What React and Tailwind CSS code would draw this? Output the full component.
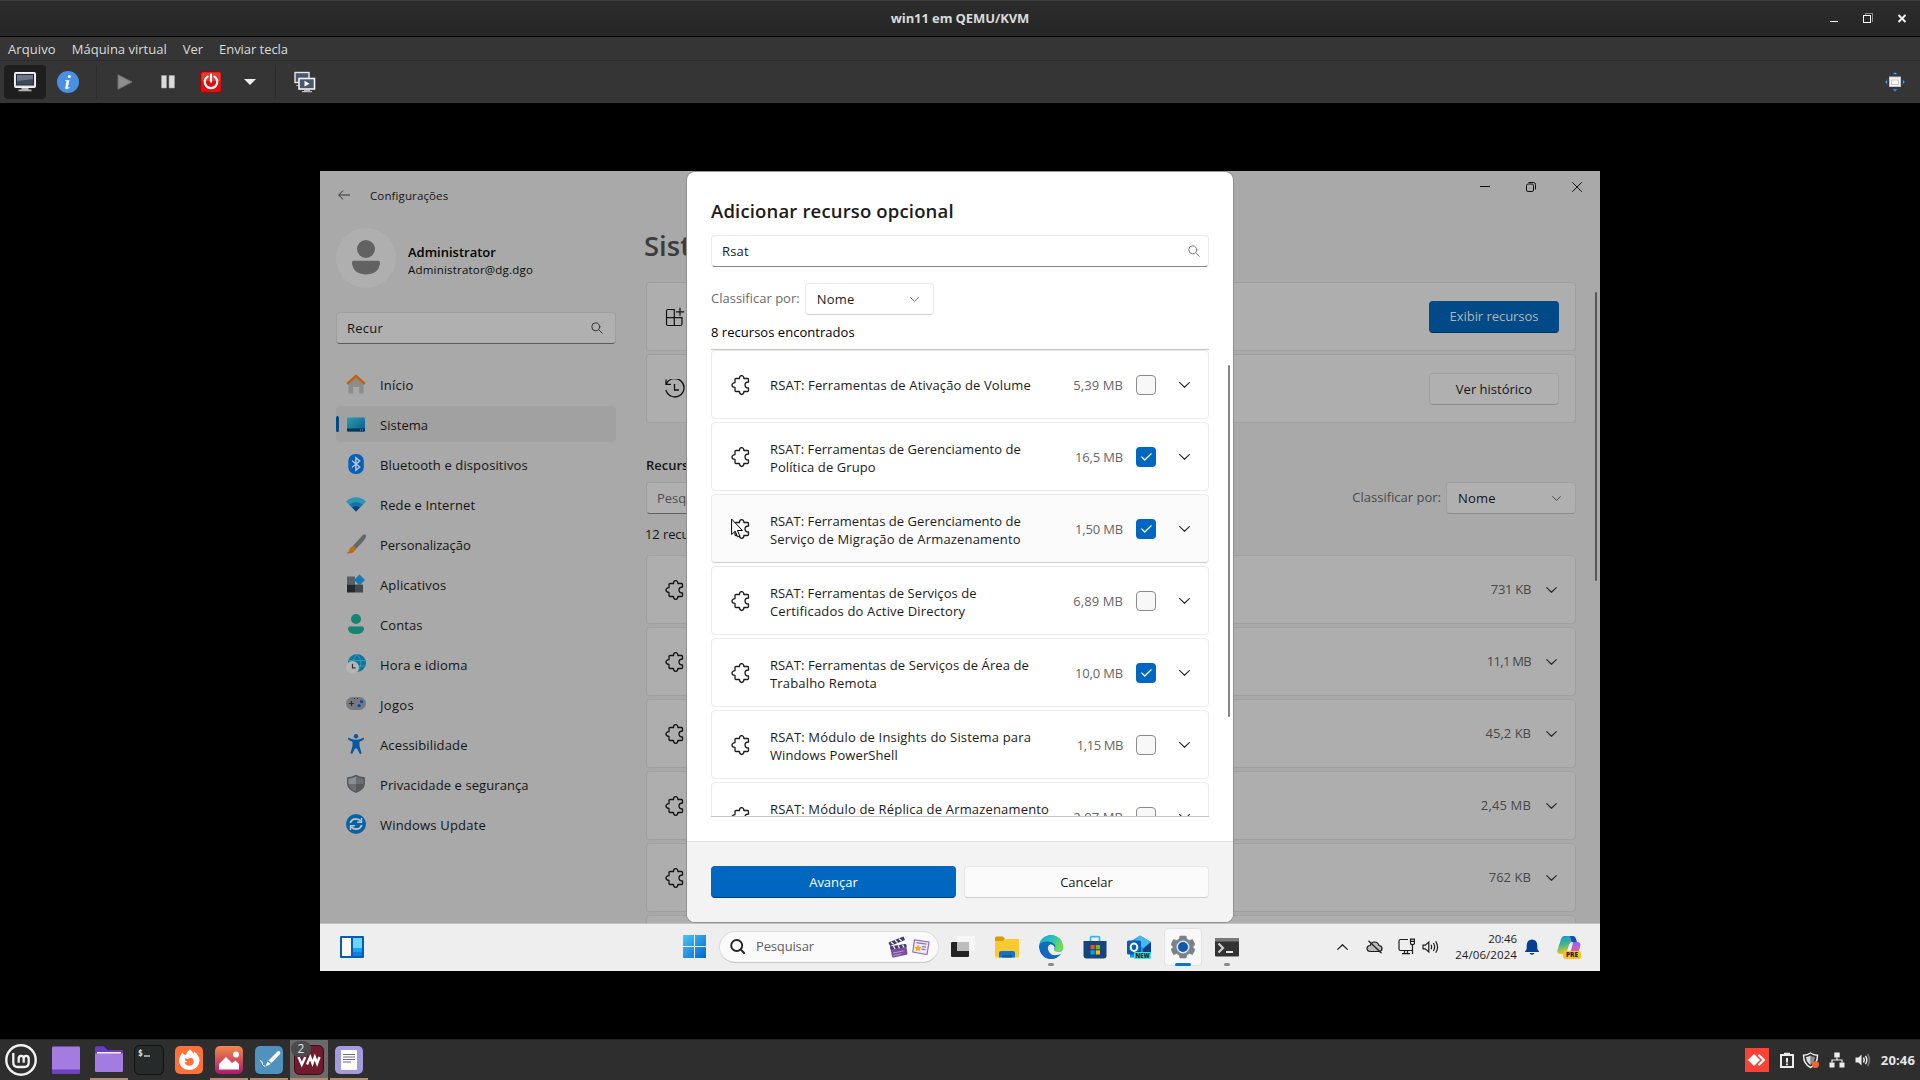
import React from "react";

const PUZZLE =
  "M17.5 7V4.500a1 1 0 0 0-1-1h-3.600C12.900 1.500 11.800.7 10.700.7S8.500 1.500 8.500 3.500H5a1 1 0 0 0-1 1v3.200C2 7.700 1 8.800 1 10S2 12.300 4 12.300v3.200a1 1 0 0 0 1 1h3.500c0 2 1.100 2.800 2.200 2.800s2.200-.8 2.200-2.800h3.600a1 1 0 0 0 1-1V13C15.500 13 14 12 14 10s1.500-3 3.500-3Z";

function Puzzle({ className = "" }) {
  return (
    <svg viewBox="0 0 20 20" className={`h-5 w-5 shrink-0 ${className}`} fill="none" stroke="currentColor" strokeWidth="1.3" strokeLinejoin="round">
      <path d={PUZZLE} />
    </svg>
  );
}

function Chevron({ className = "h-[6px] w-[11px]" }) {
  return (
    <svg viewBox="0 0 11 6" className={`shrink-0 ${className}`} fill="none" stroke="currentColor" strokeWidth="1.2" strokeLinecap="round" strokeLinejoin="round">
      <path d="M.7.6 5.5 5.3 10.3.6" />
    </svg>
  );
}

function Search({ className = "" }) {
  return (
    <svg viewBox="0 0 12 12" className={`h-3 w-3 shrink-0 ${className}`} fill="none" stroke="currentColor" strokeLinecap="round">
      <circle cx="4.8" cy="4.8" r="4" />
      <path d="m7.8 7.8 3.5 3.5" />
    </svg>
  );
}

/* ---------- virt-manager window chrome ---------- */

function HostTitleBar() {
  return (
    <div className="flex h-[37px] items-center border-b border-black border-t border-t-[#3c3c3c] bg-gradient-to-b from-[#2c2c2c] to-[#262626]">
      <div className="w-[100px]" />
      <div className="flex-1 text-center text-[13px] font-bold tracking-[-0.1px] text-[#dadada]">win11 em QEMU/KVM</div>
      <div className="flex w-[100px] items-center">
        <svg viewBox="0 0 100 20" className="h-5 w-[100px]" shapeRendering="crispEdges">
          <rect x="10" y="12" width="8" height="1" fill="#fff" />
          <path d="M45.500 5.500V4.500H52.500V12.500H51.500" fill="none" stroke="#8a8a8a" />
          <rect x="43.500" y="6.500" width="7" height="7" fill="none" stroke="#fff" />
          <path d="M78.500 6l7 7M85.500 6l-7 7" stroke="#f2f2f2" strokeWidth="2" shapeRendering="auto" />
        </svg>
      </div>
    </div>
  );
}

function HostMenu() {
  return (
    <div className="flex h-6 items-center gap-[17px] border-b border-[#2c2c2c] bg-[#353535] pl-2 pt-[2px] text-[13px] text-[#dcdcdc]">
      <span className="tracking-[0.1px]">Arquivo</span>
      <span className="-ml-[1px]">Máquina virtual</span>
      <span className="-ml-[1px]">Ver</span>
      <span className="-ml-[1px] tracking-[-0.05px]">Enviar tecla</span>
    </div>
  );
}

function Monitor() {
  return (
    <svg viewBox="0 0 22 20" className="h-5 w-[22px]">
      <rect x=".5" y=".5" width="21" height="15" rx="1" fill="#e4e4e4" stroke="#f5f5f5" />
      <rect x="2.500" y="2.500" width="17" height="10.500" fill="#3d4a5c" stroke="#1f2937" />
      <path d="M3 3h16v4L3 9z" fill="#6b7789" />
      <path d="M7.500 16h7v1.500h3v1.800h-13v-1.800h3z" fill="#b5b5b0" />
    </svg>
  );
}

function HostToolbar() {
  return (
    <div className="flex h-[42px] items-center bg-[#353535] pl-1">
      <div className="flex h-[34px] w-[42px] items-center justify-center rounded-[4px] bg-[#1e1e1e]"><Monitor /></div>
      <svg viewBox="0 0 22 22" className="ml-[11px] h-[22px] w-[22px]">
        <circle cx="11" cy="11" r="11" fill="#4a90e2" />
        <circle cx="12.300" cy="5.600" r="1.500" fill="#fff" />
        <path d="M8.300 9.200h4.200l-1.700 7q-.2 1 1.400-.1l.4.700q-3 2.300-4.300.7-.3-.5 0-1.500l1.300-5.600-1.500-.3z" fill="#fff" />
      </svg>
      <div className="ml-[17px] h-[34px] w-px bg-[#2c2c2c]" />
      <svg viewBox="0 0 16 16" className="ml-5 h-4 w-4"><path d="M1 .8 15 8 1 15.200z" fill="#8d8d8d" stroke="#6f6f6f" /></svg>
      <svg viewBox="0 0 14 14" className="ml-7 h-[14px] w-[14px]"><path d="M.5.5h5v12.500h-5zM8 .5h5.500v12.500H8z" fill="#dcdcdc" stroke="#9a9a9a" strokeWidth=".6" /></svg>
      <svg viewBox="0 0 22 22" className="ml-[25px] h-[22px] w-[22px]">
        <rect x=".5" y=".5" width="21" height="21" rx="2.500" fill="#dc1010" stroke="#8f0c0c" />
        <path d="M1.500 3q0-1.500 1.500-1.500h16q1.500 0 1.500 1.500v7h-19z" fill="#e23b32" />
        <path d="M7.600 5.600a6.300 6.300 0 1 0 6.800 0" fill="none" stroke="#fff" strokeWidth="2.200" strokeLinecap="round" />
        <path d="M11 3.600v7" stroke="#fff" strokeWidth="2.200" strokeLinecap="round" />
      </svg>
      <svg viewBox="0 0 12 6" className="ml-[22px] h-[6px] w-3"><path d="M0 0h12L6 6z" fill="#f0f0f0" /></svg>
      <div className="ml-[19px] h-[34px] w-px bg-[#2c2c2c]" />
      <svg viewBox="0 0 22 22" className="ml-[18px] h-[22px] w-[22px]">
        <rect x="1" y="1.500" width="14" height="10" fill="#4b586b" stroke="#e8e8e8" strokeWidth="1.400" />
        <path d="M2 14h4v1H2z" fill="#aaa" />
        <rect x="5" y="7.500" width="15.500" height="10.500" fill="#4b586b" stroke="#f4f4f4" strokeWidth="1.600" />
        <path d="M10.500 9.800l5 2.900-5 2.900z" fill="#fff" />
        <path d="M10 19h6v1h2v1.200H8V20h2z" fill="#b8b8b4" />
      </svg>
      <div className="flex-1" />
      <svg viewBox="0 0 22 22" className="mr-[14px] h-[22px] w-[22px]">
        <g fill="#6aa5ea" stroke="#1c3f77" strokeWidth=".8">
          <path d="M11 1l3 2.500H8zM11 20.500l3-2.500H8zM.800 11 3.300 8.300v5.400zM21.200 11l-2.500-2.700v5.400z" />
        </g>
        <rect x="5.500" y="6" width="11" height="9.500" fill="#f4f4f0" stroke="#c9c9c5" />
        <rect x="7.500" y="9" width="7" height="4.500" fill="#fff" stroke="#bfc0b8" strokeWidth=".8" />
      </svg>
    </div>
  );
}

/* ---------- Settings app ---------- */

const NAV = [
  ["Início", "tracking-[0.2px]",
    <g key="i"><path d="M3.500 9 10 3l6.500 6 1 0v10.500h-4.300V13H7.200v6.500H2.500V9z" fill="#8d8d8d" /><path d="m1.200 10 8.800-8.200L18.800 10" fill="none" stroke="#c4610f" strokeWidth="2.500" strokeLinejoin="round" /></g>],
  ["Sistema", "tracking-[0.05px]",
    <g key="i"><defs><linearGradient id="sys" x2="1" y2="1"><stop stopColor="#2a9dab" /><stop offset="1" stopColor="#0d5a91" /></linearGradient></defs><rect x="1" y="3.500" width="18" height="14" rx="1" fill="url(#sys)" /><path d="M1 14.500h18v2q0 1-1 1H2q-1 0-1-1z" fill="#0b3556" /><path d="M14 16h1m1 0h1" stroke="#6fb6d6" strokeWidth=".8" /></g>],
  ["Bluetooth e dispositivos", "tracking-[0.12px]",
    <g key="i"><rect x="2.300" width="15.500" height="20" rx="7" fill="#0a5fb8" /><path d="m6.200 6.800 7.500 6.200-3.800 3.200V3.800l3.800 3.200-7.500 6.200" fill="none" stroke="#bcc8d4" strokeWidth="1.400" /></g>],
  ["Rede e Internet", "tracking-[0.12px]",
    <g key="i"><path d="M0 7.500Q10-.800 20 7.500l-10 10z" fill="#2a97b3" /><path d="M3.200 10.500q6.800-5.200 13.600 0l-6.800 7z" fill="#1173a8" /><path d="M6.200 13.500q3.800-3 7.600 0l-3.800 4z" fill="#0c3f78" /></g>],
  ["Personalização", "tracking-[0px]",
    <g key="i"><path d="M19.700.8Q18.500-.8 14.500 3.500L6.800 12l3.200 3 7.500-8q3.500-4.500 2.200-6.200z" fill="#61686f" /><path d="M7.300 12q2.800.5 2.700 3.300-2.500 5-9.700 4 2.400-.8 3-3.500 1-3 4-3.800z" fill="#c06a17" /></g>],
  ["Aplicativos", "tracking-[0.15px]",
    <g key="i"><path d="M1 2.500h8v8H1z" fill="#596068" /><path d="M1 10.500h8v8H1z" fill="#26282b" /><path d="M9 10.500h8v8H9z" fill="#44494f" /><path d="m13.500.5 5.500 5.500-5.500 5.500L8 6z" fill="#1a79b5" /></g>],
  ["Contas", "tracking-[0.1px]",
    <g key="i"><circle cx="10" cy="5" r="5" fill="#158472" /><path d="M2 14.500q0-2 2-2h12q2 0 2 2-.5 5.500-8 5.500T2 14.500z" fill="#128673" /></g>],
  ["Hora e idioma", "tracking-[0.15px]",
    <g key="i"><circle cx="11" cy="9" r="9" fill="#15719f" /><path d="M2.500 6.500h17M3 12h16.500M11 0q-8 9 0 18M11 0q8 9 0 18" fill="none" stroke="#2ba0b0" strokeWidth="1" /><circle cx="6.500" cy="13.500" r="6.500" fill="#b5b5b5" /><path d="M6.500 9.800v4h3" fill="none" stroke="#333" strokeWidth="1.200" /></g>],
  ["Jogos", "tracking-[0.3px]",
    <g key="i"><rect y="3" width="20" height="13" rx="6.500" fill="#767a80" /><path d="M3 9.500h5M5.500 7v5" stroke="#2b2d30" strokeWidth="1.200" /><circle cx="15.500" cy="7.700" r="1.600" fill="#0b4f96" /><circle cx="13.200" cy="11.600" r="1.600" fill="#0b4f96" /><path d="M8 4.500h1m2 0h1" stroke="#333" /></g>],
  ["Acessibilidade", "tracking-[0.14px]",
    <g key="i"><circle cx="10" cy="2.200" r="2.200" fill="#08599f" /><path d="M2.500 3.800Q10 7.500 17.500 3.800q1 .9 0 1.900-2 1.300-4 2V12l2 7q-.8 1.500-2 .5L11 14.500h-2l-2.500 5q-1.500.8-2-.5l2-7V7.700q-2-.7-4-2-1-1 0-1.900z" fill="#08599f" /></g>],
  ["Privacidade e segurança", "tracking-[0.09px]",
    <g key="i"><path d="M10 .8q4 2.400 9 2.400V10q-.7 6-9 9Q1.700 16 1 10V3.200q5 0 9-2.400z" fill="#565a5f" /><path d="M10 2.500q3.500 2 7.500 2.200V10H10zM10 10v7.500Q3.200 15 2.600 10z" fill="#6b6f74" /><path d="M10 2.500Q6.500 4.500 2.500 4.700V10H10z" fill="#8b8f94" /></g>],
  ["Windows Update", "tracking-[0.2px]",
    <g key="i"><circle cx="10" cy="10" r="10" fill="#0b62a3" /><path d="M4.300 9Q5.500 4.800 10 4.800q2.700 0 4.700 2.300M15.700 11q-1.200 4.200-5.700 4.200-2.700 0-4.700-2.300" fill="none" stroke="#b9c6d0" strokeWidth="1.700" /><path d="M15.500 4v4.200h-4.300M4.500 16v-4.200h4.300" fill="none" stroke="#b9c6d0" strokeWidth="1.500" /></g>],
];

function Sidebar() {
  return (
    <div className="flex w-[280px] shrink-0 flex-col">
      <div className="flex h-[60px] items-center gap-3">
        <svg viewBox="0 0 60 60" className="h-[60px] w-[60px]">
          <circle cx="30" cy="30" r="30" fill="#afafaf" />
          <circle cx="30" cy="21" r="9" fill="#626262" />
          <path d="M16 34.500q0-1.700 1.700-1.700h24.600q1.700 0 1.700 1.700v1.500Q42 46.500 30 46.500T16 36z" fill="#626262" />
        </svg>
        <div className="flex flex-col pt-[3px]">
          <div className="h-[18px] text-[13px] font-semibold leading-[18px] text-black">Administrator</div>
          <div className="h-4 text-[11.5px] leading-[17px] tracking-[0.2px] text-[#0a0a0a]">Administrator@dg.dgo</div>
        </div>
      </div>
      <div className="mt-6 flex h-8 items-center justify-between rounded-[4px] border border-[#9e9e9e] border-b-[#5e5e5e] bg-[#b0b0b0] pl-[10px] pr-3 text-[13px] tracking-[0.25px] text-[#151515]">
        <span className="pt-px">Recur</span>
        <Search className="text-[#333]" />
      </div>
      <div className="mt-[22px] flex flex-col gap-1">
        {NAV.map(([label, track, icon], i) => (
          <div key={label} className={`flex h-9 items-center rounded-[4px] text-[13px] text-[#151515] ${i === 1 ? "bg-[#a1a1a1]" : ""}`}>
            <div className={`h-4 w-[3px] rounded-full ${i === 1 ? "bg-[#004a87]" : ""}`} />
            <svg viewBox="0 0 20 20" className="ml-[7px] h-5 w-5">{icon}</svg>
            <span className={`ml-[14px] pt-[3px] ${track}`}>{label}</span>
          </div>
        ))}
      </div>
    </div>
  );
}

const INSTALLED = [
  ["731 KB", "tracking-[-0.3px]"],
  ["11,1 MB", "tracking-[-0.7px]"],
  ["45,2 KB", "tracking-[0px]"],
  ["2,45 MB", "tracking-[0.15px]"],
  ["762 KB", "tracking-[0.05px]"],
  ["", ""],
];

const CARD = "flex h-[69px] shrink-0 items-center rounded-[4px] border border-[#9f9f9f] bg-[#aeaeae]";

function SettingsMain() {
  return (
    <div className="ml-[30px] flex w-[930px] flex-col text-[13px] text-[#151515]">
      <div className="-ml-[2px] h-[54px] text-[27.5px] font-semibold leading-[36px] text-[#3c3c3c]">Sistema</div>
      <div className="flex flex-col gap-[3px]">
        <div className={`${CARD} justify-between pl-[18px] pr-4`}>
          <svg viewBox="0 0 20 20" className="h-5 w-5" fill="none" stroke="#111" strokeWidth="1.200">
            <path d="M1.500 4q0-1.500 1.500-1.500h6.300V18.500H3q-1.500 0-1.500-1.500zM1.500 10.700H17V17q0 1.500-1.500 1.500H9.300M15 .8v8M11 4.800h8.200" />
          </svg>
          <div className="flex h-8 w-[130px] items-center justify-center rounded-[4px] border border-[#00498a] border-b-[#002f5a] bg-[#004a87] pt-px text-[#b4b4b4] tracking-[-0.05px]">Exibir recursos</div>
        </div>
        <div className={`${CARD} justify-between pl-[18px] pr-4`}>
          <svg viewBox="0 0 20 20" className="h-5 w-5" fill="none" stroke="#111" strokeWidth="1.300">
            <path d="M1 .5v4.800h5M1.500 4.800A9.200 9.200 0 1 1 .9 11M9.500 5v6h4.500" />
          </svg>
          <div className="flex h-8 w-[130px] items-center justify-center rounded-[4px] border border-[#a2a2a2] border-b-[#8c8c8c] bg-[#b0b0b0] pt-[2px]">Ver histórico</div>
        </div>
      </div>
      <div className="mt-[32px] h-[20px] font-semibold leading-[20px]">Recursos instalados</div>
      <div className="mt-[7px] flex h-8 items-center justify-between">
        <div className="flex h-8 w-[280px] items-center rounded-[4px] border border-[#9e9e9e] border-b-[#5e5e5e] bg-[#b0b0b0] pl-[10px] pt-px text-[#4f4f4f]">Pesquisar recursos</div>
        <div className="flex items-center gap-[5px] text-[#4a4a4a]">
          <span>Classificar por:</span>
          <div className="flex h-8 w-[130px] items-center justify-between rounded-[4px] border border-[#a0a0a0] border-b-[#8c8c8c] bg-[#b0b0b0] pl-[11px] pr-[14px]">
            <span className="pt-[2px] tracking-[0.2px] text-[#151515]">Nome</span>
            <Chevron className="h-[5px] w-[9px]" />
          </div>
        </div>
      </div>
      <div className="mt-[10px] h-5 leading-5 -ml-px tracking-[-0.1px]">12 recursos encontrados</div>
      <div className="mt-[11px] flex h-[368px] flex-col gap-[3px] overflow-hidden">
        {INSTALLED.map(([size, track], i) => (
          <div key={i} className={`${CARD} pl-[18px] pr-[18px]`}>
            <Puzzle className="text-[#111]" />
            <div className="flex-1" />
            <span className={`mr-[15px] pt-px text-[#484848] ${track}`}>{size}</span>
            <Chevron className="mt-px h-[6px] w-[11px] text-[#2b2b2b]" />
          </div>
        ))}
      </div>
    </div>
  );
}

function SettingsApp() {
  return (
    <div className="flex h-[752px] flex-col bg-[#a9a9a9]">
      <div className="flex h-[57px] shrink-0 items-start justify-between">
        <div className="flex h-[49px] items-center gap-5 pl-[18px]">
          <svg viewBox="0 0 12 10" className="-mt-[2px] h-[10px] w-3" fill="none" stroke="#333" strokeWidth="1"><path d="M12 5H.8M5 .6.700 5 5 9.400" /></svg>
          <span className="text-[11.5px] tracking-[0.12px] text-[#151515]">Configurações</span>
        </div>
        <svg viewBox="0 0 140 32" className="h-8 w-[140px]" fill="none" stroke="#111">
          <path d="M20 15.500h10" />
          <rect x="66.500" y="13" width="7" height="7.500" rx="1.500" />
          <path d="M68.500 11.500h5q2 0 2 2v5" />
          <path d="m112.300 11.300 9.500 9.500m0-9.500-9.500 9.500" />
        </svg>
      </div>
      <div className="flex flex-1 items-start overflow-hidden pl-4">
        <Sidebar />
        <SettingsMain />
        <div className="ml-[19px] mt-[64px] h-[289px] w-[2px] rounded-full bg-[#575757]" />
      </div>
    </div>
  );
}

/* ---------- Optional feature dialog ---------- */

const T0 = "tracking-[0.05px]";
const T1 = "tracking-[0.1px]";
const T2 = "tracking-[0.17px]";

const FEATURES = [
  { lines: [["RSAT: Ferramentas de Ativação de Volume", "tracking-[0.13px]"]], size: "5,39 MB", on: false, track: "tracking-[0.1px]" },
  { lines: [["RSAT: Ferramentas de Gerenciamento de", T0], ["Política de Grupo", T1]], size: "16,5 MB", on: true, track: "tracking-[-0.15px]" },
  { lines: [["RSAT: Ferramentas de Gerenciamento de", T0], ["Serviço de Migração de Armazenamento", T2]], size: "1,50 MB", on: true, hover: true, track: "tracking-[-0.15px]" },
  { lines: [["RSAT: Ferramentas de Serviços de", T0], ["Certificados do Active Directory", T2]], size: "6,89 MB", on: false, track: "tracking-[0.1px]" },
  { lines: [["RSAT: Ferramentas de Serviços de Área de", T1], ["Trabalho Remota", T2]], size: "10,0 MB", on: true, track: "tracking-[-0.15px]" },
  { lines: [["RSAT: Módulo de Insights do Sistema para", T2], ["Windows PowerShell", T1]], size: "1,15 MB", on: false, track: "tracking-[-0.4px]" },
  { lines: [["RSAT: Módulo de Réplica de Armazenamento", T2], ["para Windows PowerShell", T1]], size: "2,97 MB", on: false, track: "tracking-[0.1px]" },
];

function FeatureRow({ f }) {
  return (
    <div className={`relative flex h-[69px] shrink-0 items-center rounded-[4px] border pl-[19px] pr-[18px] ${f.hover ? "border-[#e9e9e9] border-b-[#cfcfcf] bg-[#fbfbfb]" : "border-[#ebebeb] bg-white"}`}>
      <Puzzle className="text-[#1b1b1b]" />
      <div className={`ml-[19px] flex-1 whitespace-nowrap text-[13px] leading-[18px] text-[#1b1b1b] ${f.lines.length > 1 ? "pt-[3px]" : "pt-px"}`}>
        {f.lines.map(([l, track]) => <div key={l} className={track}>{l}</div>)}
      </div>
      <span className={`pt-[3px] text-[13px] text-[#666] ${f.track}`}>{f.size}</span>
      {f.on ? (
        <div className="ml-[13px] flex h-5 w-5 items-center justify-center rounded-[4px] bg-[#0067c0]">
          <svg viewBox="0 0 11 8" className="h-2 w-[11px]" fill="none" stroke="#fff" strokeWidth="1.200" strokeLinecap="round" strokeLinejoin="round"><path d="m.8 4 3 3L10.200.800" /></svg>
        </div>
      ) : (
        <div className="ml-[13px] h-5 w-5 rounded-[4px] border border-[#8a8a8a] bg-[#f8f8f8]" />
      )}
      <div className="ml-[23px] flex text-[#333]"><Chevron /></div>
      {f.hover && (
        <svg viewBox="0 0 12 20" className="absolute left-[19px] top-[23px] h-5 w-3">
          <path d="M.6 1v15.500l3.600-3.300 2.400 5.600 2.200-1-2.400-5.300h5z" fill="#fff" stroke="#000" strokeWidth="1" />
        </svg>
      )}
    </div>
  );
}

function Dialog() {
  return (
    <div className="absolute left-[367px] top-px flex h-[750px] w-[546px] flex-col overflow-hidden rounded-[8px] bg-white shadow-[0_0_0_1px_#8f8f8f]">
      <div className="flex h-[669px] flex-col px-6 text-[13px] text-[#1b1b1b]">
        <div className="mt-[26px] h-[26px] text-[18.5px] font-semibold leading-[26px] tracking-[0.16px]">Adicionar recurso opcional</div>
        <div className="mt-[11px] flex h-8 w-[498px] items-center justify-between rounded-[4px] border border-[#ebebeb] border-b-[#868686] bg-white pl-[10px] pr-2">
          <span className="pt-[2px] tracking-[0.2px]">Rsat</span>
          <Search className="text-[#777]" />
        </div>
        <div className="mt-4 flex h-8 items-center gap-[5px] text-[#6b6b6b]">
          <span>Classificar por:</span>
          <div className="flex h-8 w-[129px] items-center justify-between rounded-[4px] border border-[#e9e9e9] border-b-[#d0d0d0] bg-white pl-[11px] pr-[14px]">
            <span className="pt-[2px] tracking-[0.2px] text-[#1b1b1b]">Nome</span>
            <Chevron className="h-[5px] w-[9px]" />
          </div>
        </div>
        <div className="mt-[7px] h-5 leading-5 tracking-[0.03px] text-black">8 recursos encontrados</div>
        <div className="mt-[7px] flex h-[468px] w-[498px] shrink-0 flex-col gap-[3px] overflow-hidden border-b border-t border-[#c4c4c4]">
          {FEATURES.map((f) => <FeatureRow key={f.lines.join()} f={f} />)}
        </div>
      </div>
      <div className="flex flex-1 items-start gap-2 border-t border-[#e2e2e2] bg-[#f3f3f3] px-6 pt-6 text-[13px]">
        <div className="flex h-8 w-[245px] items-center justify-center rounded-[4px] border border-[#0067c0] border-b-[#003e73] bg-[#0067c0] pt-[2px] text-white">Avançar</div>
        <div className="flex h-8 w-[245px] items-center justify-center rounded-[4px] border border-[#e6e6e6] border-b-[#cdcdcd] bg-[#fbfbfb] pt-[2px] text-[#1b1b1b]">Cancelar</div>
      </div>
      <div className="absolute right-[3px] top-[193px] h-[352px] w-[2px] rounded-full bg-[#868686]" />
    </div>
  );
}

/* ---------- Windows taskbar ---------- */

function Slot({ children, dot, active }) {
  return (
    <div className="relative flex h-[47px] w-11 items-center justify-center">
      <div className={`flex h-[38px] w-[38px] items-center justify-center rounded-[4px] ${active ? "border border-[#e2e2e2] bg-[#f8f8f8]" : ""}`}>
        <svg viewBox="0 0 24 24" className="h-6 w-6">{children}</svg>
      </div>
      {dot && <div className="absolute bottom-[4px] h-[3px] w-[6px] rounded-full bg-[#8a8a8a]" />}
      {active && <div className="absolute bottom-[4px] h-[3px] w-4 rounded-full bg-[#0078d4]" />}
    </div>
  );
}

function Taskbar() {
  return (
    <div className="flex h-12 items-center border-t border-[#c3c3c3] bg-[#eeeeee] pb-[2px]">
      <svg viewBox="0 0 24 22" className="ml-5 h-[22px] w-6">
        <rect width="24" height="22" rx="1" fill="#0b5cb0" />
        <rect x="2" y="2" width="9" height="18" fill="#fafafa" />
        <rect x="13" y="2" width="9" height="18" fill="#68d5fb" />
        <rect x="13" y="12" width="9" height="4" fill="#1aa2f0" />
        <rect x="13" y="16" width="9" height="4" fill="#0a7fe8" />
      </svg>
      <svg viewBox="0 0 23 23" className="ml-[319px] h-[23px] w-[23px]">
        <defs><linearGradient id="win" x2="1" y2="1"><stop stopColor="#4cc6fa" /><stop offset="1" stopColor="#0067cc" /></linearGradient></defs>
        <path d="M0 0h11v11H0zM12 0h11v11H12zM0 12h11v11H0zM12 12h11v11H12z" fill="url(#win)" />
      </svg>
      <div className="ml-[13px] flex h-8 w-[220px] items-center rounded-full border border-[#dcdcdc] border-b-[#c8c8c8] bg-[#fafafa] pl-[10px] pr-[8px] text-[13px] tracking-[-0.15px] text-[#5f5f5f]">
        <svg viewBox="0 0 15 15" className="mr-[11px] h-[15px] w-[15px]" fill="none" stroke="#1d2327" strokeWidth="1.900" strokeLinecap="round"><circle cx="6.700" cy="6.500" r="5.500" /><path d="m10.800 10.600 3.300 3.400" /></svg>
        <span className="flex-1 pt-px">Pesquisar</span>
        <svg viewBox="0 0 20 22" className="mr-1 h-[22px] w-5">
          <path d="M.5 6.500 15.500.5l1.500 3.500L2 10z" fill="#3d3566" />
          <path d="m3 6 2.500 2.200M7 4.300l2.500 2.200M11 2.700l2.500 2.200" stroke="#f0ecfa" strokeWidth="1.500" />
          <path d="M2 10.500 18 8l1.500 9.500q0 1-1 1.300L5.500 21.500q-1 .2-1.500-.9z" fill="#7a4f9c" />
          <path d="M2 10.500 18 8l.5 3L2.700 13.500z" fill="#463a70" />
          <path d="m5 17 10.500-2M5.500 19.500l8-1.600" stroke="#b79ad0" strokeWidth="1" />
          <path d="m5.500 10 1.500 3M10 9.300l1.500 2.900M14.500 8.600l1.500 2.900" stroke="#ece6f7" strokeWidth="1.300" />
        </svg>
        <svg viewBox="0 0 18 16" className="h-4 w-[18px]">
          <path d="M2.500.8 17 3l-2 12.500L.8 13z" fill="#efe9f7" stroke="#8f6fb5" strokeWidth="1.200" />
          <path d="m4.500 3.700 10 1.500M10 7.500l4 .6m-4.500 2 4 .6" stroke="#8f6fb5" strokeWidth="1.200" />
          <path d="m6 5.800 1.200 2 2.300.4-1.700 1.700.3 2.400L6 11.300l-2.200 1 .4-2.400-1.600-1.700 2.300-.4z" fill="#f8a914" />
        </svg>
      </div>
      <div className="ml-[2px] flex">
        <Slot>
          <rect x="0" y="7" width="18" height="15" rx="1" fill="#242424" />
          <rect x="6" y="1" width="18" height="15" rx="1" fill="#f7f7f7" />
          <path d="M6 7h12v9H7q-1 0-1-1z" fill="#bdbdbd" />
        </Slot>
        <Slot>
          <path d="M0 3q0-1.500 1.500-1.500H8l2 2.500-2 3H0z" fill="#d79a08" />
          <path d="M0 6h8l2-2h14v17q0 1.500-1.500 1.500h-21Q0 22.500 0 21z" fill="#fcc92e" />
          <path d="M4 18q0-2 2-2h12q2 0 2 2v4.500H4z" fill="#1272c4" />
          <path d="M7 20h10v2.500H7z" fill="#0c5aa5" />
        </Slot>
        <Slot dot>
          <defs>
            <linearGradient id="e1" x2="1" y2=".4"><stop stopColor="#1a9fe0" /><stop offset=".6" stopColor="#2fc2b8" /><stop offset="1" stopColor="#6fe04a" /></linearGradient>
            <linearGradient id="e2" x2="1" y2="1"><stop stopColor="#0c78cf" /><stop offset="1" stopColor="#0b4fa0" /></linearGradient>
            <clipPath id="ec"><circle cx="12" cy="12" r="12" /></clipPath>
          </defs>
          <g clipPath="url(#ec)">
            <circle cx="12" cy="12" r="12" fill="url(#e2)" />
            <path d="M-1 10Q1-1 12-1q13 0 13 12 0 5.800-6.500 5.800-5-.1-3-3 1.500-2 .2-4Q13 6.500 8 6.500 2 6.500-1 11z" fill="url(#e1)" />
            <path d="M8.800 14q-.2-3.800 3-4.700 3 .5 3.800 2.700.2 1.200-.6 2.300-.6 2.300 3.500 2.500 4 0 6.500-2v4l-5 2.500q-9 1-11.200-7.300z" fill="#eeeeee" />
            <path d="M8.300 12.500Q9 20 16 20.200q4 0 6.500-1.700L18 25H6Q1 16 8.300 12.500z" fill="#1468bd" />
          </g>
        </Slot>
        <Slot>
          <path d="M7.500 6V3q0-1.300 1.300-1.300h6.400Q16.500 1.700 16.500 3v3" fill="none" stroke="#34b5ee" strokeWidth="1.700" />
          <path d="M.5 6h23v14.500q0 3-3 3h-17q-3 0-3-3z" fill="#16457d" />
          <path d="M7.500 10h4.200v4.200H7.500z" fill="#f25022" /><path d="M12.800 10H17v4.200h-4.200z" fill="#7fba00" />
          <path d="M7.500 15.300h4.200v4.200H7.500z" fill="#00a4ef" /><path d="M12.800 15.300H17v4.200h-4.200z" fill="#ffb900" />
        </Slot>
        <Slot>
          <path d="m3 7 10-6.500L24 7v15.500H3z" fill="#1f8fe0" />
          <path d="m13 .5 11 6.500-8 6-8-8z" fill="#44b8f5" />
          <path d="m24 7-8 7v8h8z" fill="#0d3f8c" />
          <rect y="5.500" width="14" height="14" rx="1.500" fill="#0a5cb8" />
          <ellipse cx="7" cy="12.300" rx="3.300" ry="3.700" fill="none" stroke="#fff" strokeWidth="2" />
          <rect x="7" y="17" width="17" height="7" rx="1" fill="#3fe6e0" />
          <text x="15.500" y="22.800" textAnchor="middle" fontSize="6" fontWeight="800" fill="#0a2a33">NEW</text>
        </Slot>
        <Slot active>
          <path d="M9 1h6l1 3.200 2.200 1.200 3.300-.8 2.500 5-2.300 2.400 2.300 2.400-2.500 5-3.300-.8L16 19.800 15 23H9l-1-3.200-2.200-1.200-3.300.8-2.500-5L2.300 12 0 9.600l2.500-5 3.300.8L8 4.200z" fill="#78828c" stroke="#78828c" strokeLinejoin="round" strokeWidth=".6" />
          <circle cx="12" cy="12" r="6.500" fill="#dfe4e8" />
          <circle cx="12" cy="12" r="5" fill="#0f5ba8" />
        </Slot>
        <Slot dot>
          <rect y="3" width="24" height="18.500" rx="1" fill="#333" />
          <path d="M1 3h22q1 0 1 1v2.500H0V4q0-1 1-1z" fill="#7a7a7a" />
          <path d="m3.500 8.500 4.500 4.500-4.500 4.500" fill="none" stroke="#d0d0d0" strokeWidth="2.200" />
          <path d="M11 17h7" stroke="#fff" strokeWidth="1.800" />
        </Slot>
      </div>
      <div className="ml-[88px] flex h-full items-center text-[#1b1b1b]">
        <Chevron className="h-[6px] w-[11px] rotate-180" />
        <svg viewBox="0 0 17 14" className="ml-[18px] h-[14px] w-[17px]" fill="none" stroke="#1b1b1b" strokeWidth="1.200">
          <path d="M4.500 11.500h8.500q3-.3 3-3T13 5.500Q12 2 8.500 2 5 2 4.300 5.500 1 5.700 1 8.500q.2 3 3.500 3z" fill="#b9b9b9" /><path d="M2.500.8 15.500 13.200" />
        </svg>
        <svg viewBox="0 0 17 17" className="ml-[15px] h-[17px] w-[17px]" fill="none" stroke="#1b1b1b" strokeWidth="1.200">
          <path d="M10 1.500H2.500q-1.500 0-1.500 1.500v8q0 1.500 1.500 1.500H14M4 15.700h8M6.500 12.500v3M9.500 12.500v3M14.500 7v9M12.500 1.200h4V5q0 1.700-2 1.700T12.500 5zM12.500 3.300h4" />
        </svg>
        <svg viewBox="0 0 17 14" className="ml-[7px] h-[14px] w-[17px]" fill="none" stroke="#1b1b1b" strokeWidth="1.200">
          <path d="M1 5.200v3.600h2.300l3.500 3.100V2.100L3.300 5.200zM9 4.700q1.300 2.300 0 4.600M11.400 3q2.500 4 0 8M13.700 1.300q3.800 5.700 0 11.400" />
        </svg>
        <div className="ml-[15px] flex w-[63px] flex-col items-end text-[11.5px] leading-4">
          <span className="tracking-[-0.1px]">20:46</span>
          <span className="tracking-[0.08px]">24/06/2024</span>
        </div>
        <svg viewBox="0 0 14 16" className="ml-2 h-4 w-[14px]" fill="#063f92">
          <path d="M7 .5q5 .3 5.300 5.500v4L14 12.500v.5H0v-.5L1.700 10V6Q2 .8 7 .5zM4.500 14h5Q9 15.800 7 15.800T4.500 14z" />
        </svg>
        <svg viewBox="0 0 24 24" className="ml-[18px] h-6 w-6">
          <defs>
            <linearGradient id="c1" x2=".3" y2="1"><stop stopColor="#1a8fe0" /><stop offset=".5" stopColor="#3db58c" /><stop offset="1" stopColor="#f5c81e" /></linearGradient>
            <linearGradient id="c2" x2="0" y2="1"><stop stopColor="#9b5cf0" /><stop offset="1" stopColor="#f0609a" /></linearGradient>
          </defs>
          <path d="M7 1h9q2 0 3 3l.8 3H15q-2 0-3 3l-2 6q-.8 3-3 3H3q-3.500 0-2.500-4L4 4q.8-3 3-3z" fill="url(#c1)" />
          <path d="M13 1h3q2 0 3 3l.8 3h-5z" fill="#1546c8" />
          <path d="M15.500 7H20q4 0 3.300 4l-1.800 6q-.8 3-3.500 3h-7q1.500 0 2.500-3l2-7q.5-2 0-3z" fill="url(#c2)" />
          <rect x="6" y="16" width="18" height="8" rx="2" fill="#fcc419" />
          <text x="15" y="22.400" textAnchor="middle" fontSize="6.500" fontWeight="800" fill="#222">PRE</text>
        </svg>
      </div>
    </div>
  );
}

/* ---------- Host panel ---------- */

function PanelItem({ children, open, focus, className = "" }) {
  return (
    <div className={`relative flex h-10 w-[38px] items-center justify-center ${focus ? "bg-[#6a6a6a]" : ""} ${className}`}>
      <svg viewBox="0 0 30 30" className="h-[30px] w-[30px]">{children}</svg>
      {open && <div className="absolute inset-x-0 bottom-0 h-[2px] bg-[#b58b70]" />}
    </div>
  );
}

function HostPanel() {
  return (
    <div className="flex h-[41px] items-center border-t border-[#232323] bg-[#2e2e2e]">
      <svg viewBox="0 0 32 32" className="ml-[5px] h-8 w-8" fill="none" stroke="#f2f2f2">
        <circle cx="16" cy="16" r="14.700" strokeWidth="2.400" />
        <path d="M8.300 9v9.500q0 4.500 4.500 4.500h6.400q4.500 0 4.500-4.500v-4q0-2.700-2.500-2.700t-2.500 2.700v4.300M18.700 14.500q0-2.700-2.500-2.700t-2.500 2.700v4.300" strokeWidth="2.300" />
      </svg>
      <div className="ml-[10px] flex gap-[2px]">
        <PanelItem className="mr-[3px]"><rect x="1" y="1.500" width="28" height="27" rx="1" fill="#a47be0" /><path d="M1 24.500h28v3q0 1-1 1H2q-1 0-1-1z" fill="#6f3fc4" /></PanelItem>
        <PanelItem open><path d="M1 2.500q0-1.200 1.200-1.200H10L13.500 5H28q1 0 1 1v8H1z" fill="#6a3dbd" /><path d="M3 7h24v5H3z" fill="#f1edf8" /><path d="M1 8.500h28V26q0 1-1 1H2q-1 0-1-1z" fill="#a47be0" /></PanelItem>
        <PanelItem><rect x=".500" y=".5" width="29" height="29" rx="5" fill="#262a2a" stroke="#111" /><text x="4" y="10.500" fontSize="8" fontWeight="700" fill="#e8e8e8" fontFamily="DejaVu Sans Mono, monospace">$</text><path d="M10 11h6" stroke="#e8e8e8" strokeWidth="1.200" /></PanelItem>
        <PanelItem><rect x="1" y="1" width="28" height="28" rx="5" fill="#ff7139" /><path d="M16 4.500q2.500 1.500 3 4 1.200-.3 1-2 5.200 3 5.500 9-.5 9-10.200 9.500-9.800-.5-10.300-9.500.2-3 1.700-5L8 7.500q1.300.8 2 2.200 1 0 2 .3.800-3.500 4-5.500z" fill="#fff" /><path d="M10.500 13.500q2-.3 3.500.7 1.300-1.700 3.500-1.200 2.500 1.200 2.300 4-.6 3.600-4.600 3.800-4-.3-4.700-3.800 1.500.8 3-.5-2.500-.5-3-3z" fill="#ff7139" /></PanelItem>
        <PanelItem open>
          <defs><linearGradient id="pix" x2="0" y2="1"><stop stopColor="#f08a4b" /><stop offset="1" stopColor="#b0186e" /></linearGradient></defs>
          <rect x="1" y="1" width="28" height="28" rx="5" fill="url(#pix)" /><path d="m5 19 7-7 6 6 3.500-2.500L25 19v5.500H5z" fill="#fff" /><circle cx="22" cy="9.500" r="3" fill="#fff" /></PanelItem>
        <PanelItem open><rect x="1" y="1" width="28" height="28" rx="5" fill="#5191bd" /><path d="M23.500 6.500q1-1 2.200 0t.4 2.500L17.500 18l-3-2.500zM13.500 16.400l3.200 2.600-5.200 2.500z" fill="#fff" /><path d="M6 15.500q2.500.5 2.200 2.500t2.800 3.500" fill="none" stroke="#fff" strokeWidth="1" /></PanelItem>
        <div className="relative">
          <PanelItem open focus><rect x=".500" y=".5" width="29" height="29" rx="5" fill="#701a2e" stroke="#3d0c18" /><path d="m4.500 12 3.300 7.500 3.500-7.500M13 19.500l3.200-7.500 2.300 6.500 2.300-6.500 2.300 6.500 2.400-6.500" fill="none" stroke="#fff" strokeWidth="2.400" /></PanelItem>
          <div className="absolute left-[1px] top-[1px] flex h-4 w-5 items-center justify-center rounded-full bg-[#4a4a4a] text-[12px] text-[#dfe6ee]">2</div>
        </div>
        <PanelItem open><rect x="1" y="1" width="28" height="28" rx="5" fill="#a29bdc" /><rect x="7" y="5" width="16" height="20" rx="1" fill="#fff" /><path d="M9 9.500h12M9 12h12M9 14.500h12M9 17h8" stroke="#6e6a96" strokeWidth="1.100" /></PanelItem>
      </div>
      <div className="flex-1" />
      <svg viewBox="0 0 24 24" className="h-6 w-6"><rect width="24" height="24" fill="#fb4237" /><path d="M3 12l6-6 6 6-6 6z" fill="#fff" /><path d="m13.500 6.800 5.200 5.200-5.200 5.200" fill="none" stroke="#fff" strokeWidth="2.300" /></svg>
      <svg viewBox="0 0 14 16" className="ml-[11px] h-4 w-[14px]"><rect x="1" y="3" width="12" height="12" fill="none" stroke="#ececec" strokeWidth="2" /><path d="M4 .800h6V4H4zM6 6h2v4.500H6zM6 11.500h2v1.700H6z" fill="#ececec" /></svg>
      <svg viewBox="0 0 18 17" className="ml-[8px] h-[17px] w-[18px]"><path d="M8.500 1q3 2 7 2.200 0 8.800-7 12.300-7-3.500-7-12.300Q5.500 3 8.500 1z" fill="none" stroke="#ececec" strokeWidth="1.500" /><path d="M8.500 3.500q2 1.300 4.500 1.500-.5 5.500-4.500 8z" fill="#8b8b8b" /><path d="M8.500 3.500Q6.500 4.800 4 5q.5 5.500 4.500 8z" fill="#ddd" /><circle cx="13.500" cy="12.500" r="3.500" fill="#ec6a2b" /></svg>
      <svg viewBox="0 0 16 16" className="ml-[9px] h-4 w-4"><path d="M5.300.5h5.400v5H5.300zM.500 10.500h5v5h-5zM10.500 10.500h5v5h-5z" fill="#ececec" /><path d="M3 10.500V8h10v2.500M8 5.500V8" fill="none" stroke="#ececec" strokeWidth="1.200" /></svg>
      <svg viewBox="0 0 16 14" className="ml-[10px] h-[14px] w-4"><path d="M.5 4.500h3L6.500 1.500v11l-3-3h-3z" fill="#ececec" /><path d="M8.500 4.500q1.500 2.500 0 5M10.500 2.800q2.700 4.200 0 8.400" fill="none" stroke="#ececec" strokeWidth="1.500" /><path d="M12.600 1q3.800 6 0 12" fill="none" stroke="#777" strokeWidth="1.500" /></svg>
      <span className="ml-[10px] mr-[5px] pt-px text-[13px] font-bold tracking-[0.15px] text-[#e6e6e6]">20:46</span>
    </div>
  );
}

export default function App() {
  return (
    <div className="flex h-[1080px] w-[1920px] flex-col overflow-hidden bg-black font-['Open_Sans','Noto_Sans',sans-serif]">
      <HostTitleBar />
      <HostMenu />
      <HostToolbar />
      <div className="flex flex-1 items-start justify-center pt-[68px]">
        <div className="relative flex h-[800px] w-[1280px] flex-col overflow-hidden">
          <SettingsApp />
          <Taskbar />
          <Dialog />
        </div>
      </div>
      <HostPanel />
    </div>
  );
}
